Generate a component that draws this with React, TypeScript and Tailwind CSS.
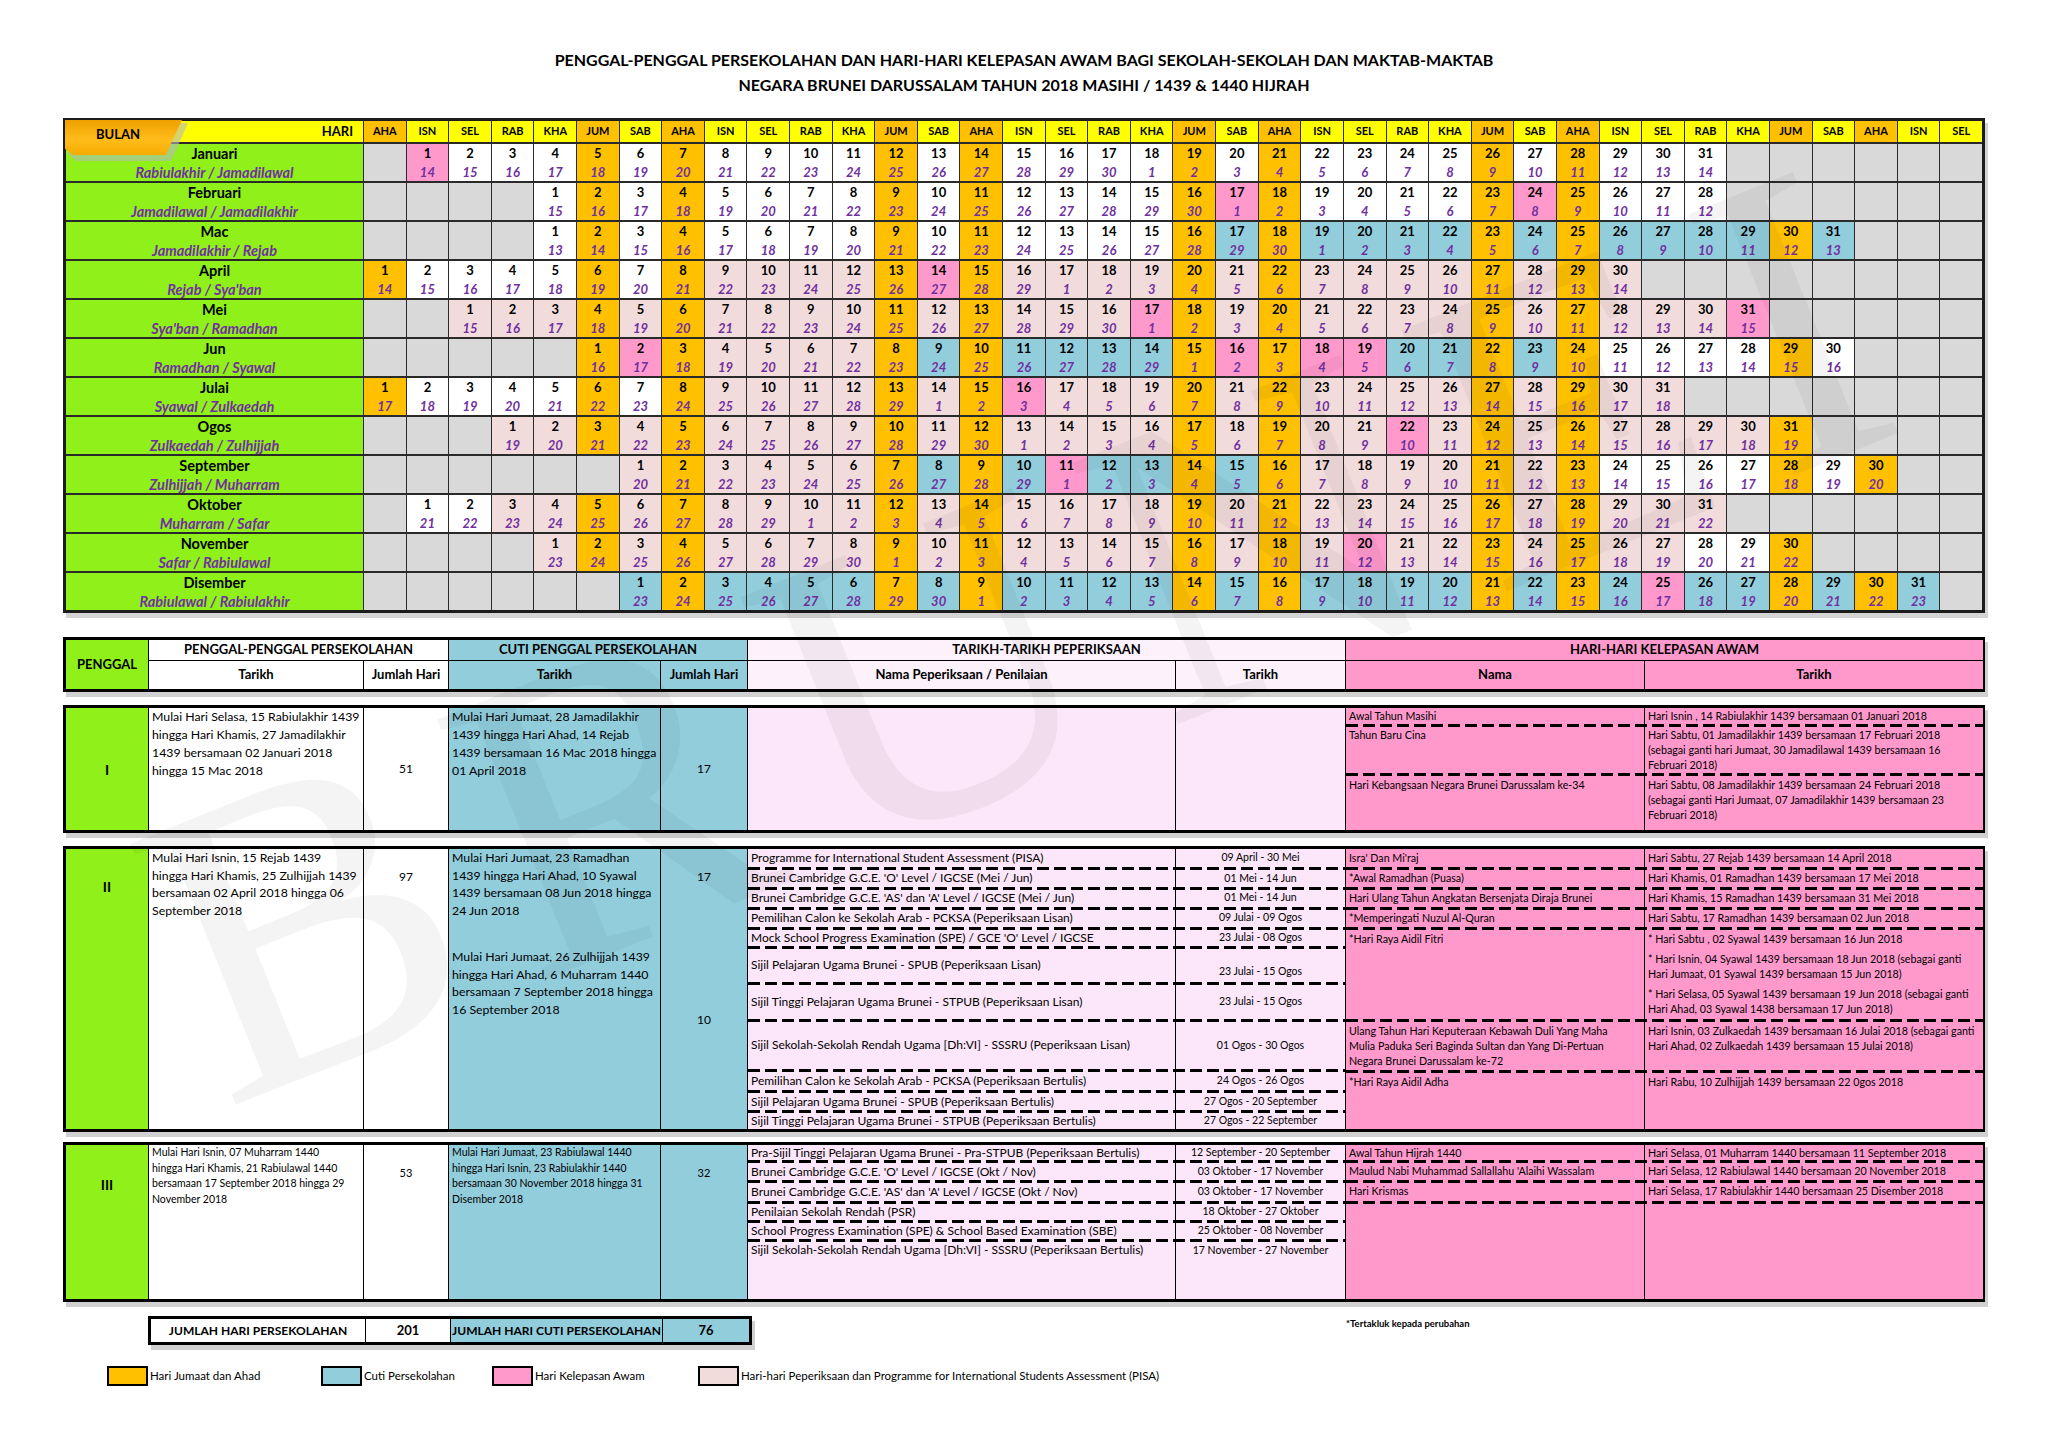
import React from "react"

const F = "font-['Lato','Open_Sans',sans-serif]"

const DAYS = ["AHA", "ISN", "SEL", "RAB", "KHA", "JUM", "SAB"]
const COLS = Array.from({ length: 38 }, (_, i) => DAYS[i % 7])

type Kind = "w" | "c" | "p" | "e"

interface Month {
  name: string
  hijri: string
  off: number
  days: number
  h0: number
  hl: number
  marks: [Kind, number, number][]
}

const MONTHS: Month[] = [
  { name: "Januari", hijri: "Rabiulakhir / Jamadilawal", off: 1, days: 31, h0: 14, hl: 30, marks: [["p", 1, 1]] },
  { name: "Februari", hijri: "Jamadilawal / Jamadilakhir", off: 4, days: 28, h0: 15, hl: 30, marks: [["p", 17, 17], ["p", 24, 24]] },
  { name: "Mac", hijri: "Jamadilakhir / Rejab", off: 4, days: 31, h0: 13, hl: 30, marks: [["c", 17, 31]] },
  { name: "April", hijri: "Rejab / Sya'ban", off: 0, days: 30, h0: 14, hl: 29, marks: [["e", 9, 30], ["p", 14, 14]] },
  { name: "Mei", hijri: "Sya'ban / Ramadhan", off: 2, days: 31, h0: 15, hl: 30, marks: [["e", 1, 31], ["p", 17, 17], ["p", 31, 31]] },
  { name: "Jun", hijri: "Ramadhan / Syawal", off: 5, days: 30, h0: 16, hl: 29, marks: [["e", 1, 7], ["c", 8, 24], ["p", 2, 2], ["p", 16, 16], ["p", 18, 19]] },
  { name: "Julai", hijri: "Syawal / Zulkaedah", off: 0, days: 31, h0: 17, hl: 29, marks: [["e", 9, 31], ["p", 16, 16]] },
  { name: "Ogos", hijri: "Zulkaedah / Zulhijjah", off: 3, days: 31, h0: 19, hl: 30, marks: [["e", 1, 31], ["p", 22, 22]] },
  { name: "September", hijri: "Zulhijjah / Muharram", off: 6, days: 30, h0: 20, hl: 29, marks: [["e", 1, 6], ["c", 7, 16], ["p", 11, 11], ["e", 17, 22]] },
  { name: "Oktober", hijri: "Muharram / Safar", off: 1, days: 31, h0: 21, hl: 29, marks: [["e", 3, 31]] },
  { name: "November", hijri: "Safar / Rabiulawal", off: 4, days: 30, h0: 23, hl: 30, marks: [["e", 1, 27], ["p", 20, 20]] },
  { name: "Disember", hijri: "Rabiulawal / Rabiulakhir", off: 6, days: 31, h0: 23, hl: 30, marks: [["c", 1, 31], ["p", 25, 25]] },
]

const BG: Record<string, string> = {
  w: "bg-white",
  c: "bg-[#92cddc]",
  p: "bg-[#ff99cc]",
  e: "bg-[#f2dcdb]",
  o: "bg-[#ffc000]",
}

const GREEN = "bg-[#90f01a]"
const CYAN = "bg-[#92cddc]"
const PINK = "bg-[#ff99cc]"
const LAV = "bg-[#fce6f9]"

function kindOf(m: Month, d: number) {
  let k: Kind = "w"
  for (const [mk, a, b] of m.marks) if (d >= a && d <= b) k = mk
  return k
}

function Calendar() {
  return (
    <div className="relative mt-[21px] grid grid-cols-[297px_repeat(38,minmax(0,1fr))] grid-rows-[21px_repeat(12,37px)] gap-x-px gap-y-[2px] border-[3px] border-[#1c1c1c] bg-[#2a2a2a] shadow-[3px_5px_0_#d4d4d4]">
      <div className="flex items-center justify-end bg-[#ffff00] pr-[10px] text-[13px] font-bold">HARI</div>
      {COLS.map((d, i) => (
        <div
          key={i}
          className={`${i % 7 === 0 || i % 7 === 5 ? "bg-[#ffc000]" : "bg-[#ffff00]"} flex items-center justify-center text-[11px] font-bold`}
        >
          {d}
        </div>
      ))}
      {MONTHS.map((m) => (
        <React.Fragment key={m.name}>
          <div className={`${GREEN} flex flex-col items-center justify-center leading-[19px]`}>
            <span className="text-[14.5px] font-bold">{m.name}</span>
            <span className="text-[14.5px] font-bold italic text-[#7030a0]">{m.hijri}</span>
          </div>
          {COLS.map((_, i) => {
            const d = i - m.off + 1
            if (d < 1 || d > m.days) return <div key={i} className="bg-[#d9d9d9]" />
            const weekend = i % 7 === 0 || i % 7 === 5
            const k = weekend ? "o" : kindOf(m, d)
            const raw = m.h0 + d - 1
            const h = raw > m.hl ? raw - m.hl : raw
            return (
              <div key={i} className={`${BG[k]} flex flex-col items-center justify-center leading-[19px]`}>
                <span className="text-[13px] font-bold">{d}</span>
                <span className="text-[13px] font-bold italic text-[#7030a0]">{h}</span>
              </div>
            )
          })}
        </React.Fragment>
      ))}
      {/* BULAN tab */}
      <div className="absolute -left-[1px] -top-[1px] z-10 h-[38px] w-[120px] translate-x-[3px] translate-y-[3px] bg-[#b8b8b8]/60 [clip-path:polygon(0_0,100%_0,86%_100%,7%_100%,0_82%)]" />
      <div className="absolute -left-[1px] -top-[1px] z-10 h-[35px] w-[117px] bg-[linear-gradient(180deg,#eea000,#ffbc1a_55%,#f6ac00)] pl-[31px] pt-[6px] text-[13px] font-bold leading-[16px] [clip-path:polygon(0_0,100%_0,86%_100%,7%_100%,0_82%)]">
        BULAN
      </div>
    </div>
  )
}

const GRID =
  "grid grid-cols-[82px_214px_84px_211px_86px_427px_169px_298px_338px] gap-px border-[3px] border-black bg-black shadow-[3px_5px_0_#d0d0d0]"

function Dash() {
  return (
    <div className="h-[3px] shrink-0 bg-[image:repeating-linear-gradient(90deg,#000_0px,#000_12px,transparent_12px,transparent_17px)]" />
  )
}

interface Row {
  h: string
  a?: React.ReactNode
  b?: React.ReactNode
  aCls?: string
  bCls?: string
}

function Rows({ rows, left, bg, aCls, bCls }: { rows: Row[]; left: string; bg: string; aCls: string; bCls: string }) {
  return (
    <div className={`col-span-2 flex flex-col ${bg}`}>
      {rows.map((r, i) => (
        <React.Fragment key={i}>
          {i > 0 && <Dash />}
          <div className={`flex ${r.h}`}>
            <div className={`${left} shrink-0 overflow-hidden whitespace-nowrap ${aCls} ${r.aCls ?? ""}`}>{r.a}</div>
            <div className={`flex-1 overflow-hidden whitespace-nowrap border-l border-black ${bCls} ${r.bCls ?? ""}`}>{r.b}</div>
          </div>
        </React.Fragment>
      ))}
    </div>
  )
}

const L = (...ls: string[]) => ls.map((l, i) => <div key={i}>{l}</div>)

const EX_A = "flex items-center pl-[3px] text-[12px] leading-[14px]"
const EX_B = "flex items-center justify-center text-[10.5px]"
const HO_A = "pl-[3px] pt-[1px] text-[10.7px] leading-[15px]"
const HO_B = "pl-[3px] pt-[1px] text-[10.7px] leading-[15px]"

function Header() {
  const hc = "flex items-center justify-center text-[13px] font-bold"
  return (
    <div className={`${GRID} mt-[24px] grid-rows-[20px_28px]`}>
      <div className={`row-span-2 ${GREEN} ${hc}`}>PENGGAL</div>
      <div className={`col-span-2 bg-white ${hc}`}>PENGGAL-PENGGAL PERSEKOLAHAN</div>
      <div className={`col-span-2 ${CYAN} ${hc}`}>CUTI PENGGAL PERSEKOLAHAN</div>
      <div className={`col-span-2 bg-[#fdf1fb] ${hc}`}>TARIKH-TARIKH PEPERIKSAAN</div>
      <div className={`col-span-2 ${PINK} ${hc}`}>HARI-HARI KELEPASAN AWAM</div>
      <div className={`bg-white ${hc}`}>Tarikh</div>
      <div className={`bg-white ${hc} text-[12.5px]`}>Jumlah Hari</div>
      <div className={`${CYAN} ${hc}`}>Tarikh</div>
      <div className={`${CYAN} ${hc} text-[12.5px]`}>Jumlah Hari</div>
      <div className={`bg-[#fdf1fb] ${hc}`}>Nama Peperiksaan / Penilaian</div>
      <div className={`bg-[#fdf1fb] ${hc}`}>Tarikh</div>
      <div className={`${PINK} ${hc}`}>Nama</div>
      <div className={`${PINK} ${hc}`}>Tarikh</div>
    </div>
  )
}

function PenggalI() {
  const txt = "pl-[3px] text-[12.3px] leading-[18px] whitespace-nowrap overflow-hidden"
  return (
    <div className={`${GRID} mt-[13px] h-[128px] grid-rows-[minmax(0,1fr)]`}>
      <div className={`${GREEN} flex items-center justify-center text-[14px] font-bold`}>I</div>
      <div className={`bg-white ${txt}`}>
        {L("Mulai Hari Selasa, 15 Rabiulakhir 1439", "hingga Hari Khamis, 27 Jamadilakhir", "1439 bersamaan 02  Januari 2018", "hingga 15 Mac 2018")}
      </div>
      <div className="flex items-center justify-center bg-white text-[12px]">51</div>
      <div className={`${CYAN} ${txt}`}>
        {L("Mulai Hari Jumaat, 28 Jamadilakhir", "1439 hingga  Hari Ahad, 14 Rejab", "1439 bersamaan  16 Mac 2018 hingga", "01 April 2018")}
      </div>
      <div className={`${CYAN} flex items-center justify-center text-[12px]`}>17</div>
      <Rows rows={[{ h: "flex-1" }]} left="w-[427px]" bg={LAV} aCls={EX_A} bCls={EX_B} />
      <Rows
        left="w-[298px]"
        bg={PINK}
        aCls={HO_A}
        bCls={HO_B}
        rows={[
          { h: "h-[16px]", a: "Awal Tahun Masihi", b: "Hari Isnin , 14 Rabiulakhir 1439 bersamaan 01 Januari 2018", aCls: "!pt-0", bCls: "!pt-0" },
          {
            h: "h-[46px]",
            a: "Tahun Baru Cina",
            b: L("Hari Sabtu, 01 Jamadilakhir 1439 bersamaan 17 Februari 2018", "(sebagai ganti hari Jumaat, 30 Jamadilawal 1439 bersamaan 16", "Februari 2018)"),
            aCls: "!pt-0",
            bCls: "!pt-0",
          },
          {
            h: "flex-1",
            a: "Hari Kebangsaan Negara Brunei Darussalam ke-34",
            b: L("Hari Sabtu, 08 Jamadilakhir 1439 bersamaan 24 Februari 2018", "(sebagai ganti Hari Jumaat, 07 Jamadilakhir 1439 bersamaan 23", "Februari 2018)"),
          },
        ]}
      />
    </div>
  )
}

function PenggalII() {
  const txt = "pl-[3px] text-[12.3px] leading-[17.5px] whitespace-nowrap overflow-hidden"
  return (
    <div className={`${GRID} mt-[13px] h-[286px] grid-rows-[minmax(0,1fr)]`}>
      <div className={`${GREEN} flex justify-center pt-[30px] text-[14px] font-bold leading-[16px]`}>II</div>
      <div className={`bg-white ${txt}`}>
        {L("Mulai Hari Isnin, 15 Rejab 1439", "hingga Hari Khamis, 25 Zulhijjah 1439", "bersamaan  02 April 2018 hingga 06", "September 2018")}
      </div>
      <div className="flex justify-center bg-white pt-[20px] text-[12px] leading-[16px]">97</div>
      <div className={`${CYAN} ${txt}`}>
        {L("Mulai Hari Jumaat, 23 Ramadhan", "1439 hingga Hari Ahad, 10 Syawal", "1439 bersamaan  08 Jun 2018 hingga", "24 Jun 2018")}
        <div className="mt-[29px]">
          {L("Mulai Hari Jumaat,  26 Zulhijjah 1439", "hingga Hari Ahad, 6 Muharram 1440", "bersamaan 7 September 2018 hingga", "16 September 2018")}
        </div>
      </div>
      <div className={`${CYAN} flex flex-col items-center pt-[20px] text-[12px] leading-[16px]`}>
        <span>17</span>
        <span className="mt-[127px]">10</span>
      </div>
      <Rows
        left="w-[427px]"
        bg={LAV}
        aCls={EX_A}
        bCls={EX_B}
        rows={[
          { h: "h-[18px]", a: "Programme for International Student Assessment (PISA)", b: "09 April - 30 Mei" },
          { h: "h-[17px]", a: "Brunei Cambridge G.C.E. 'O' Level / IGCSE (Mei / Jun)", b: "01 Mei - 14 Jun" },
          { h: "h-[17px]", a: "Brunei Cambridge G.C.E. 'AS' dan 'A' Level / IGCSE (Mei / Jun)", b: "01 Mei - 14 Jun" },
          { h: "h-[17px]", a: "Pemilihan Calon ke Sekolah Arab - PCKSA (Peperiksaan Lisan)", b: "09 Julai - 09 Ogos" },
          { h: "h-[16px]", a: "Mock School Progress Examination (SPE) / GCE 'O' Level / IGCSE", b: "23 Julai - 08 Ogos" },
          { h: "h-[33px]", a: "Sijil Pelajaran Ugama Brunei - SPUB (Peperiksaan Lisan)", b: "23 Julai - 15 Ogos", bCls: "pt-[14px]" },
          { h: "h-[34px]", a: "Sijil Tinggi Pelajaran Ugama Brunei - STPUB (Peperiksaan Lisan)", b: "23 Julai - 15 Ogos" },
          { h: "h-[48px]", a: "Sijil Sekolah-Sekolah Rendah Ugama [Dh:VI] - SSSRU (Peperiksaan Lisan)", b: "01 Ogos - 30 Ogos" },
          { h: "h-[18px]", a: "Pemilihan Calon ke Sekolah Arab - PCKSA (Peperiksaan Bertulis)", b: "24 Ogos - 26 Ogos" },
          { h: "h-[17px]", a: "Sijil Pelajaran Ugama Brunei - SPUB (Peperiksaan Bertulis)", b: "27 Ogos - 20 September" },
          { h: "flex-1", a: "Sijil Tinggi Pelajaran Ugama Brunei - STPUB (Peperiksaan Bertulis)", b: "27 Ogos - 22 September" },
        ]}
      />
      <Rows
        left="w-[298px]"
        bg={PINK}
        aCls={HO_A}
        bCls={HO_B}
        rows={[
          { h: "h-[18px]", a: "Isra' Dan Mi'raj", b: "Hari Sabtu, 27 Rejab 1439 bersamaan 14 April 2018" },
          { h: "h-[17px]", a: "*Awal Ramadhan (Puasa)", b: "Hari Khamis, 01 Ramadhan 1439 bersamaan 17 Mei 2018", aCls: "!pt-0", bCls: "!pt-0" },
          { h: "h-[17px]", a: "Hari Ulang Tahun Angkatan Bersenjata Diraja Brunei", b: "Hari Khamis, 15 Ramadhan 1439 bersamaan 31 Mei 2018", aCls: "!pt-0", bCls: "!pt-0" },
          { h: "h-[17px]", a: "*Memperingati Nuzul Al-Quran", b: "Hari Sabtu, 17 Ramadhan 1439 bersamaan 02 Jun 2018", aCls: "!pt-0", bCls: "!pt-0" },
          {
            h: "h-[89px]",
            a: "*Hari Raya Aidil Fitri",
            b: (
              <div className="flex flex-col gap-[5px]">
                <div>* Hari Sabtu , 02 Syawal 1439 bersamaan 16 Jun 2018</div>
                <div>{L("* Hari Isnin, 04 Syawal 1439 bersamaan 18 Jun 2018 (sebagai ganti", "Hari Jumaat, 01 Syawal 1439 bersamaan 15 Jun 2018)")}</div>
                <div>{L("* Hari Selasa, 05 Syawal 1439 bersamaan 19 Jun 2018 (sebagai ganti", "Hari Ahad, 03 Syawal 1438 bersamaan 17 Jun 2018)")}</div>
              </div>
            ),
          },
          {
            h: "h-[48px]",
            a: L("Ulang Tahun Hari Keputeraan Kebawah Duli Yang Maha", "Mulia Paduka Seri Baginda Sultan dan Yang Di-Pertuan", "Negara Brunei Darussalam ke-72"),
            b: L("Hari Isnin, 03 Zulkaedah 1439 bersamaan 16 Julai 2018 (sebagai ganti", "Hari Ahad, 02 Zulkaedah 1439 bersamaan 15 Julai 2018)"),
          },
          { h: "flex-1", a: "*Hari Raya Aidil Adha", b: "Hari Rabu, 10 Zulhijjah 1439 bersamaan 22 0gos 2018" },
        ]}
      />
    </div>
  )
}

function PenggalIII() {
  const txt = "pl-[3px] text-[10.5px] leading-[15.5px] whitespace-nowrap overflow-hidden"
  return (
    <div className={`${GRID} mt-[10px] h-[160px] grid-rows-[minmax(0,1fr)]`}>
      <div className={`${GREEN} flex justify-center pt-[32px] text-[14px] font-bold leading-[16px]`}>III</div>
      <div className={`bg-white ${txt}`}>
        {L("Mulai Hari Isnin, 07 Muharram 1440", "hingga Hari Khamis, 21 Rabiulawal 1440", "bersamaan 17 September 2018 hingga 29", "November 2018")}
      </div>
      <div className="flex justify-center bg-white pt-[20px] text-[11px] leading-[16px]">53</div>
      <div className={`${CYAN} ${txt}`}>
        {L("Mulai Hari Jumaat, 23 Rabiulawal 1440", "hingga Hari Isnin, 23 Rabiulakhir 1440", "bersamaan 30 November  2018 hingga 31", "Disember 2018")}
      </div>
      <div className={`${CYAN} flex justify-center pt-[20px] text-[11px] leading-[16px]`}>32</div>
      <Rows
        left="w-[427px]"
        bg={LAV}
        aCls={EX_A}
        bCls={EX_B}
        rows={[
          { h: "h-[15px]", a: "Pra-Sijil Tinggi Pelajaran Ugama Brunei - Pra-STPUB (Peperiksaan Bertulis)", b: "12 September - 20 September" },
          { h: "h-[17px]", a: "Brunei Cambridge G.C.E. 'O' Level / IGCSE (Okt / Nov)", b: "03 Oktober - 17 November" },
          { h: "h-[18px]", a: "Brunei Cambridge G.C.E. 'AS' dan 'A' Level / IGCSE  (Okt / Nov)", b: "03 Oktober - 17 November" },
          { h: "h-[16px]", a: "Penilaian Sekolah Rendah (PSR)", b: "18 Oktober - 27 Oktober" },
          { h: "h-[16px]", a: "School Progress Examination (SPE) & School Based Examination (SBE)", b: "25 Oktober - 08 November" },
          { h: "flex-1", a: "Sijil Sekolah-Sekolah Rendah Ugama [Dh:VI] - SSSRU (Peperiksaan Bertulis)", b: "17 November - 27 November", aCls: "!items-start pt-[1px]", bCls: "!items-start pt-[1px]" },
        ]}
      />
      <Rows
        left="w-[298px]"
        bg={PINK}
        aCls={HO_A}
        bCls={HO_B}
        rows={[
          { h: "h-[15px]", a: "Awal Tahun Hijrah 1440", b: "Hari Selasa, 01 Muharram 1440 bersamaan 11 September 2018", aCls: "!pt-0", bCls: "!pt-0" },
          { h: "h-[17px]", a: "Maulud Nabi Muhammad Sallallahu 'Alaihi Wassalam", b: "Hari Selasa, 12 Rabiulawal 1440 bersamaan 20 November 2018", aCls: "!pt-0", bCls: "!pt-0" },
          { h: "h-[18px]", a: "Hari Krismas", b: "Hari Selasa, 17 Rabiulakhir 1440 bersamaan 25 Disember 2018", aCls: "!pt-0", bCls: "!pt-0" },
          { h: "flex-1" },
        ]}
      />
    </div>
  )
}

function Totals() {
  const c = "flex items-center justify-center font-bold"
  return (
    <div className="mt-[14px] flex items-start">
      <div className="ml-[85px] grid h-[29px] grid-cols-[214px_84px_211px_86px] gap-px border-[3px] border-black bg-black shadow-[3px_5px_0_#d0d0d0]">
        <div className={`bg-white ${c} text-[12px]`}>JUMLAH HARI PERSEKOLAHAN</div>
        <div className={`bg-white ${c} text-[13px]`}>201</div>
        <div className={`${CYAN} ${c} text-[12px]`}>JUMLAH HARI CUTI PERSEKOLAHAN</div>
        <div className={`${CYAN} ${c} text-[13px]`}>76</div>
      </div>
      <div className="ml-[594px] mt-[2px] text-[9.5px] font-bold leading-[12px]">*Tertakluk kepada perubahan</div>
    </div>
  )
}

function Legend() {
  const items = [
    { w: "w-[214px]", bg: "bg-[#ffc000]", t: "Hari Jumaat dan Ahad" },
    { w: "w-[171px]", bg: CYAN, t: "Cuti Persekolahan" },
    { w: "w-[206px]", bg: PINK, t: "Hari Kelepasan Awam" },
    { w: "", bg: "bg-[#f2dcdb]", t: "Hari-hari Peperiksaan dan Programme for International Students Assessment (PISA)" },
  ]
  return (
    <div className="ml-[44px] mt-[21px] flex items-center">
      {items.map((it) => (
        <div key={it.t} className={`flex items-center ${it.w}`}>
          <div className={`h-[20px] w-[41px] shrink-0 border-[2px] border-black ${it.bg}`} />
          <span className="ml-[2px] text-[11.5px]">{it.t}</span>
        </div>
      ))}
    </div>
  )
}

export default function App() {
  return (
    <div className={`relative h-[1447px] w-[2048px] overflow-hidden bg-white px-[63px] pt-[47px] text-black ${F}`}>
      <div className="text-center text-[16px] font-bold leading-[25px]">
        <div>PENGGAL-PENGGAL PERSEKOLAHAN DAN HARI-HARI KELEPASAN AWAM BAGI SEKOLAH-SEKOLAH DAN MAKTAB-MAKTAB</div>
        <div>NEGARA BRUNEI DARUSSALAM TAHUN 2018 MASIHI / 1439 &amp; 1440 HIJRAH</div>
      </div>
      <Calendar />
      <Header />
      <PenggalI />
      <PenggalII />
      <PenggalIII />
      <Totals />
      <Legend />

      {/* faint watermark */}
      <div className="pointer-events-none absolute left-[170px] top-[760px] origin-left -rotate-[22deg] whitespace-nowrap font-['Liberation_Serif',serif] text-[430px] leading-none tracking-[44px] text-black/[0.045]">
        BRUNEI
      </div>
    </div>
  )
}
